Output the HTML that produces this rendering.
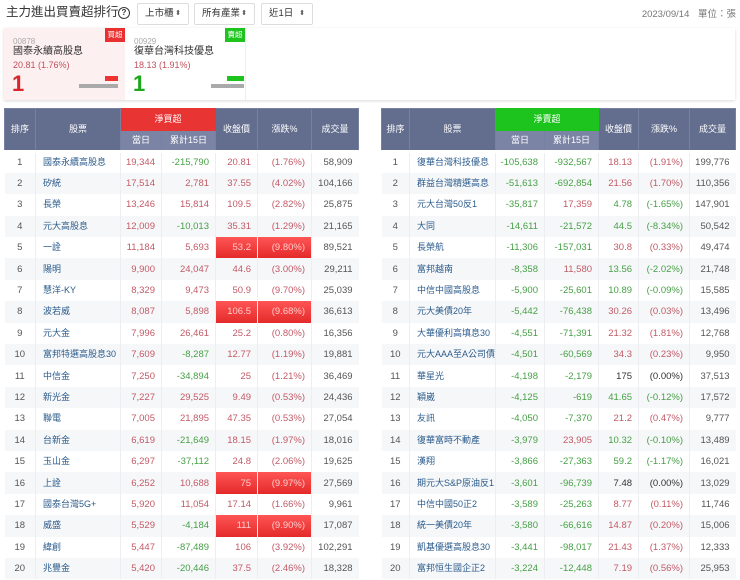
<!DOCTYPE html>
<html><head><meta charset="utf-8"><style>
*{margin:0;padding:0;box-sizing:border-box}
body{width:740px;height:580px;overflow:hidden;background:#fff;font-family:"Liberation Sans","Noto Sans CJK TC",sans-serif;color:#333;position:relative}
.title{position:absolute;left:6px;top:4px;font-size:12.5px;line-height:17px;color:#333;letter-spacing:0}
.q{position:absolute;left:118px;top:7px;width:12px;height:12px;border:1.5px solid #333;border-radius:50%;font-size:8px;line-height:9px;text-align:center;font-weight:bold}
.sel{position:absolute;top:3px;height:22px;border:1px solid #ddd;border-radius:2px;font-size:9.5px;line-height:20px;padding-left:7px;color:#333}
.sel i{position:absolute;right:7px;top:0;font-style:normal;font-size:7px;color:#555}
.date{position:absolute;right:4px;top:9px;font-size:9.5px;line-height:12px;color:#777;word-spacing:6px}
.cards{position:absolute;left:4px;top:28px;width:731px;height:72px;background:#fff;box-shadow:0 1px 3px rgba(0,0,0,.15)}
.card{position:absolute;top:0;height:72px;width:121px}
.card .code{position:absolute;left:9px;top:9px;font-size:8px;line-height:9px;color:#aaa}
.card .nm{position:absolute;left:9px;top:17px;font-size:10px;line-height:13px;color:#333}
.card .pr{position:absolute;left:9px;top:32px;font-size:9px;line-height:11px;color:#c0505a}
.card .big{position:absolute;left:8px;top:44px;font-size:22px;line-height:24px;font-weight:bold}
.badge{position:absolute;right:0;top:0;width:20px;height:14px;font-size:7.5px;color:#fff;text-align:center;line-height:14px}
table{position:absolute;top:108px;border-collapse:collapse;table-layout:fixed;font-size:9.5px}
th{background:#636d8e;color:#fff;font-weight:normal;border:1px solid #7780a0;font-size:9px;line-height:11px}
th.sub{background:#7b84a4}
th.rd{background:#e93434;border-color:#e93434}
th.gn{background:#1ec41e;border-color:#1ec41e}
thead tr:first-child th{height:22px}
thead tr:nth-child(2) th{height:21px}
td{height:21.4px;line-height:11px;vertical-align:middle;border-left:1px solid #eceef2;text-align:right;padding-right:6px;color:#555;white-space:nowrap;overflow:hidden}
td:first-child{text-align:center;padding:0;border-left:none}
td:nth-child(2){text-align:left;padding-left:7px;color:#2b5b8c;font-size:9px}
tbody tr:nth-child(even) td{background:#f6f7f9}
tbody tr:first-child td{border-top:3px solid #fff}
td.r{color:#c25a66}td.g{color:#46a046}td.k{color:#333}
tbody tr td.h{background:linear-gradient(#f55,#e42a2a)!important;color:#fcc}
</style></head><body>
<div class="title">主力進出買賣超排行</div>
<div class="q">?</div>
<div class="sel" style="left:137px;width:52px">上市櫃<i>⬍</i></div>
<div class="sel" style="left:194px;width:61px">所有產業<i>⬍</i></div>
<div class="sel" style="left:261px;width:52px">近1日<i>⬍</i></div>
<div class="date">2023/09/14 單位：張</div>
<div class="cards">
 <div class="card" style="left:0;background:#fdf0f1">
  <div class="code">00878</div><div class="nm">國泰永續高股息</div><div class="pr">20.81 (1.76%)</div>
  <div class="big" style="color:#d8262e">1</div>
  <div class="badge" style="background:#e83030">買超</div>
  <div style="position:absolute;left:75px;top:56px;width:39px;height:4px;background:#aaa"></div>
  <div style="position:absolute;left:101px;top:48px;width:13px;height:5px;background:#e33"></div>
 </div>
 <div class="card" style="left:121px;background:#fff;border-right:1px solid #eee">
  <div class="code">00929</div><div class="nm">復華台灣科技優息</div><div class="pr">18.13 (1.91%)</div>
  <div class="big" style="color:#1ea81e">1</div>
  <div class="badge" style="background:#1ec41e">賣超</div>
  <div style="position:absolute;left:86px;top:56px;width:33px;height:4px;background:#aaa"></div>
  <div style="position:absolute;left:102px;top:48px;width:17px;height:5px;background:#1ec41e"></div>
 </div>
</div>

<table style="left:4px;width:354px">
<colgroup><col style="width:31px"><col style="width:85px"><col style="width:41px"><col style="width:54px"><col style="width:42px"><col style="width:54px"><col style="width:47px"></colgroup>
<thead><tr><th rowspan="2">排序</th><th rowspan="2">股票</th><th colspan="2" class="rd">淨買超</th><th rowspan="2">收盤價</th><th rowspan="2">漲跌%</th><th rowspan="2">成交量</th></tr>
<tr><th class="sub">當日</th><th class="sub">累計15日</th></tr></thead>
<tbody>
<tr><td>1</td><td>國泰永續高股息</td><td class="r">19,344</td><td class="g">-215,790</td><td class="r">20.81</td><td class="r">(1.76%)</td><td>58,909</td></tr>
<tr><td>2</td><td>矽統</td><td class="r">17,514</td><td class="r">2,781</td><td class="r">37.55</td><td class="r">(4.02%)</td><td>104,166</td></tr>
<tr><td>3</td><td>長榮</td><td class="r">13,246</td><td class="r">15,814</td><td class="r">109.5</td><td class="r">(2.82%)</td><td>25,875</td></tr>
<tr><td>4</td><td>元大高股息</td><td class="r">12,009</td><td class="g">-10,013</td><td class="r">35.31</td><td class="r">(1.29%)</td><td>21,165</td></tr>
<tr><td>5</td><td>一詮</td><td class="r">11,184</td><td class="r">5,693</td><td class="h">53.2</td><td class="h">(9.80%)</td><td>89,521</td></tr>
<tr><td>6</td><td>陽明</td><td class="r">9,900</td><td class="r">24,047</td><td class="r">44.6</td><td class="r">(3.00%)</td><td>29,211</td></tr>
<tr><td>7</td><td>慧洋-KY</td><td class="r">8,329</td><td class="r">9,473</td><td class="r">50.9</td><td class="r">(9.70%)</td><td>25,039</td></tr>
<tr><td>8</td><td>波若威</td><td class="r">8,087</td><td class="r">5,898</td><td class="h">106.5</td><td class="h">(9.68%)</td><td>36,613</td></tr>
<tr><td>9</td><td>元大金</td><td class="r">7,996</td><td class="r">26,461</td><td class="r">25.2</td><td class="r">(0.80%)</td><td>16,356</td></tr>
<tr><td>10</td><td>富邦特選高股息30</td><td class="r">7,609</td><td class="g">-8,287</td><td class="r">12.77</td><td class="r">(1.19%)</td><td>19,881</td></tr>
<tr><td>11</td><td>中信金</td><td class="r">7,250</td><td class="g">-34,894</td><td class="r">25</td><td class="r">(1.21%)</td><td>36,469</td></tr>
<tr><td>12</td><td>新光金</td><td class="r">7,227</td><td class="r">29,525</td><td class="r">9.49</td><td class="r">(0.53%)</td><td>24,436</td></tr>
<tr><td>13</td><td>聯電</td><td class="r">7,005</td><td class="r">21,895</td><td class="r">47.35</td><td class="r">(0.53%)</td><td>27,054</td></tr>
<tr><td>14</td><td>台新金</td><td class="r">6,619</td><td class="g">-21,649</td><td class="r">18.15</td><td class="r">(1.97%)</td><td>18,016</td></tr>
<tr><td>15</td><td>玉山金</td><td class="r">6,297</td><td class="g">-37,112</td><td class="r">24.8</td><td class="r">(2.06%)</td><td>19,625</td></tr>
<tr><td>16</td><td>上詮</td><td class="r">6,252</td><td class="r">10,688</td><td class="h">75</td><td class="h">(9.97%)</td><td>27,569</td></tr>
<tr><td>17</td><td>國泰台灣5G+</td><td class="r">5,920</td><td class="r">11,054</td><td class="r">17.14</td><td class="r">(1.66%)</td><td>9,961</td></tr>
<tr><td>18</td><td>威盛</td><td class="r">5,529</td><td class="g">-4,184</td><td class="h">111</td><td class="h">(9.90%)</td><td>17,087</td></tr>
<tr><td>19</td><td>緯創</td><td class="r">5,447</td><td class="g">-87,489</td><td class="r">106</td><td class="r">(3.92%)</td><td>102,291</td></tr>
<tr><td>20</td><td>兆豐金</td><td class="r">5,420</td><td class="g">-20,446</td><td class="r">37.5</td><td class="r">(2.46%)</td><td>18,328</td></tr>
</tbody></table>

<table style="left:381px;width:354px">
<colgroup><col style="width:28px"><col style="width:86px"><col style="width:49px"><col style="width:54px"><col style="width:40px"><col style="width:51px"><col style="width:46px"></colgroup>
<thead><tr><th rowspan="2">排序</th><th rowspan="2">股票</th><th colspan="2" class="gn">淨賣超</th><th rowspan="2">收盤價</th><th rowspan="2">漲跌%</th><th rowspan="2">成交量</th></tr>
<tr><th class="sub">當日</th><th class="sub">累計15日</th></tr></thead>
<tbody>
<tr><td>1</td><td>復華台灣科技優息</td><td class="g">-105,638</td><td class="g">-932,567</td><td class="r">18.13</td><td class="r">(1.91%)</td><td>199,776</td></tr>
<tr><td>2</td><td>群益台灣精選高息</td><td class="g">-51,613</td><td class="g">-692,854</td><td class="r">21.56</td><td class="r">(1.70%)</td><td>110,356</td></tr>
<tr><td>3</td><td>元大台灣50反1</td><td class="g">-35,817</td><td class="r">17,359</td><td class="g">4.78</td><td class="g">(-1.65%)</td><td>147,901</td></tr>
<tr><td>4</td><td>大同</td><td class="g">-14,611</td><td class="g">-21,572</td><td class="g">44.5</td><td class="g">(-8.34%)</td><td>50,542</td></tr>
<tr><td>5</td><td>長榮航</td><td class="g">-11,306</td><td class="g">-157,031</td><td class="r">30.8</td><td class="r">(0.33%)</td><td>49,474</td></tr>
<tr><td>6</td><td>富邦越南</td><td class="g">-8,358</td><td class="r">11,580</td><td class="g">13.56</td><td class="g">(-2.02%)</td><td>21,748</td></tr>
<tr><td>7</td><td>中信中國高股息</td><td class="g">-5,900</td><td class="g">-25,601</td><td class="g">10.89</td><td class="g">(-0.09%)</td><td>15,585</td></tr>
<tr><td>8</td><td>元大美債20年</td><td class="g">-5,442</td><td class="g">-76,438</td><td class="r">30.26</td><td class="r">(0.03%)</td><td>13,496</td></tr>
<tr><td>9</td><td>大華優利高填息30</td><td class="g">-4,551</td><td class="g">-71,391</td><td class="r">21.32</td><td class="r">(1.81%)</td><td>12,768</td></tr>
<tr><td>10</td><td>元大AAA至A公司債</td><td class="g">-4,501</td><td class="g">-60,569</td><td class="r">34.3</td><td class="r">(0.23%)</td><td>9,950</td></tr>
<tr><td>11</td><td>華星光</td><td class="g">-4,198</td><td class="g">-2,179</td><td class="k">175</td><td class="k">(0.00%)</td><td>37,513</td></tr>
<tr><td>12</td><td>穎崴</td><td class="g">-4,125</td><td class="g">-619</td><td class="g">41.65</td><td class="g">(-0.12%)</td><td>17,572</td></tr>
<tr><td>13</td><td>友訊</td><td class="g">-4,050</td><td class="g">-7,370</td><td class="r">21.2</td><td class="r">(0.47%)</td><td>9,777</td></tr>
<tr><td>14</td><td>復華富時不動產</td><td class="g">-3,979</td><td class="r">23,905</td><td class="g">10.32</td><td class="g">(-0.10%)</td><td>13,489</td></tr>
<tr><td>15</td><td>漢翔</td><td class="g">-3,866</td><td class="g">-27,363</td><td class="g">59.2</td><td class="g">(-1.17%)</td><td>16,021</td></tr>
<tr><td>16</td><td>期元大S&amp;P原油反1</td><td class="g">-3,601</td><td class="g">-96,739</td><td class="k">7.48</td><td class="k">(0.00%)</td><td>13,029</td></tr>
<tr><td>17</td><td>中信中國50正2</td><td class="g">-3,589</td><td class="g">-25,263</td><td class="r">8.77</td><td class="r">(0.11%)</td><td>11,746</td></tr>
<tr><td>18</td><td>統一美債20年</td><td class="g">-3,580</td><td class="g">-66,616</td><td class="r">14.87</td><td class="r">(0.20%)</td><td>15,006</td></tr>
<tr><td>19</td><td>凱基優選高股息30</td><td class="g">-3,441</td><td class="g">-98,017</td><td class="r">21.43</td><td class="r">(1.37%)</td><td>12,333</td></tr>
<tr><td>20</td><td>富邦恒生國企正2</td><td class="g">-3,224</td><td class="g">-12,448</td><td class="r">7.19</td><td class="r">(0.56%)</td><td>25,953</td></tr>
</tbody></table>
</body></html>
